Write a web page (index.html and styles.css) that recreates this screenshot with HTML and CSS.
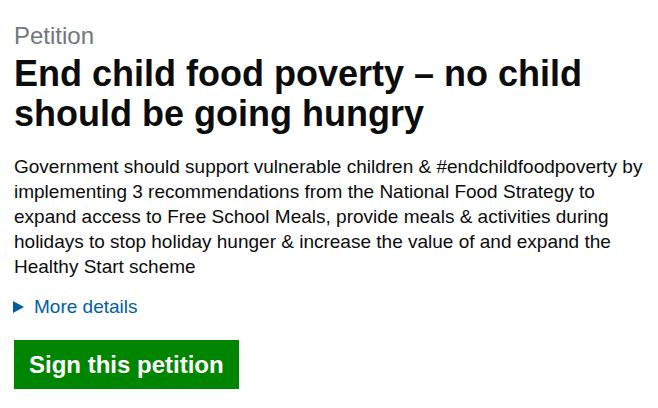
FILE: index.html
```html
<!DOCTYPE html>
<html lang="en">
<head>
<meta charset="utf-8">
<title>Petition</title>
<link rel="stylesheet" href="styles.css">
</head>
<body>
<main class="page">
  <span class="caption">Petition</span>
  <h1 class="title">End child food poverty – no child should be going hungry</h1>
  <p class="lede">Government should support vulnerable children &amp; #endchildfoodpoverty by implementing 3 recommendations from the National Food Strategy to expand access to Free School Meals, provide meals &amp; activities during holidays to stop holiday hunger &amp; increase the value of and expand the Healthy Start scheme</p>
  <details class="details">
    <summary class="summary"><span class="arrow"></span><span class="summary-text">More details</span></summary>
  </details>
  <a class="button" href="#">Sign this petition</a>
</main>
</body>
</html>
```
FILE: styles.css
```css
* { box-sizing: border-box; }
html, body { margin: 0; padding: 0; background: #fff; }
body {
  font-family: "Liberation Sans", Arial, sans-serif;
  color: #0b0c0c;
}
.page {
  padding: 21px 14px 0 14px;
  display: flex;
  flex-direction: column;
  align-items: flex-start;
}
.caption {
  display: block;
  font-size: 24px;
  line-height: 30px;
  color: #6f777b;
}
.title {
  margin: 3px 0 0 0;
  font-size: 36px;
  line-height: 40px;
  font-weight: 700;
  max-width: 600px;
}
.lede {
  margin: 20px 0 0 0;
  font-size: 19px;
  line-height: 25px;
}
.details {
  margin-top: 15px;
}
.summary {
  list-style: none;
  display: flex;
  align-items: center;
  font-size: 19px;
  line-height: 25px;
  color: #005ea5;
  cursor: pointer;
}
.summary::-webkit-details-marker { display: none; }
.arrow {
  width: 0;
  height: 0;
  border-top: 6px solid transparent;
  border-bottom: 6px solid transparent;
  border-left: 11px solid #005ea5;
  margin: 0 10px 0 -1px;
}
.button {
  margin-top: 21px;
  display: inline-block;
  background: #008500;
  color: #fff;
  font-weight: 700;
  font-size: 24px;
  line-height: 49px;
  padding: 0 15px;
  text-decoration: none;
  box-shadow: 0 2px 0 #003a00;
}
```
